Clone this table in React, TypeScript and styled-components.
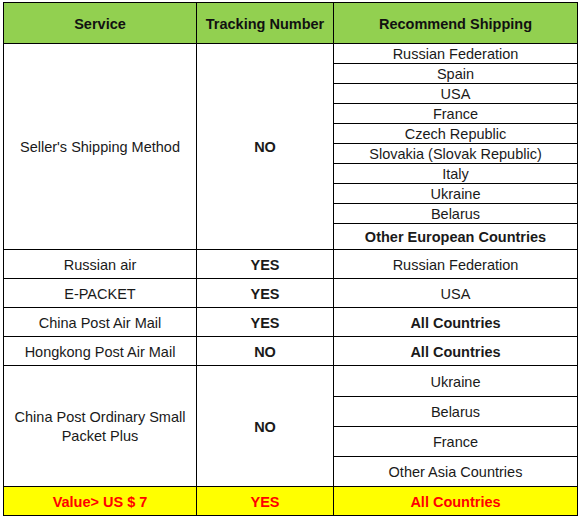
import React from "react";
import styled, { createGlobalStyle } from "styled-components";

const GlobalStyle = createGlobalStyle`
  html, body {
    margin: 0;
    padding: 0;
    background: #fff;
  }
  body {
    font-family: "Liberation Sans", Arial, sans-serif;
  }
`;

type Row = { text: string; bold?: boolean; h: number };

const sellerCountries: Row[] = [
  { text: "Russian Federation", h: 19 },
  { text: "Spain", h: 19 },
  { text: "USA", h: 19 },
  { text: "France", h: 19 },
  { text: "Czech Republic", h: 19 },
  { text: "Slovakia (Slovak Republic)", h: 19 },
  { text: "Italy", h: 19 },
  { text: "Ukraine", h: 19 },
  { text: "Belarus", h: 19 },
  { text: "Other European Countries", bold: true, h: 25 },
];

const singles = [
  { service: "Russian air", tracking: "YES", ship: "Russian Federation", shipBold: false },
  { service: "E-PACKET", tracking: "YES", ship: "USA", shipBold: false },
  { service: "China Post Air Mail", tracking: "YES", ship: "All Countries", shipBold: true },
  { service: "Hongkong Post Air Mail", tracking: "NO", ship: "All Countries", shipBold: true },
];

const smallPacketCountries: Row[] = [
  { text: "Ukraine", h: 30 },
  { text: "Belarus", h: 29 },
  { text: "France", h: 29 },
  { text: "Other Asia Countries", h: 29 },
];

export default function App() {
  const rowHeights = [
    40,
    ...sellerCountries.map((r) => r.h),
    28, 28, 28, 28,
    ...smallPacketCountries.map((r) => r.h),
    28,
  ];

  return (
    <>
      <GlobalStyle />
      <Page>
        <Table style={{ gridTemplateRows: rowHeights.map((h) => `${h}px`).join(" ") }}>
          <Head>Service</Head>
          <Head>Tracking Number</Head>
          <Head>Recommend Shipping</Head>

          <Cell $span={sellerCountries.length}>Seller's Shipping Method</Cell>
          <Cell $span={sellerCountries.length} $bold>NO</Cell>
          {sellerCountries.map((c, i) => (
            <Cell key={i} $bold={c.bold}>{c.text}</Cell>
          ))}

          {singles.map((s, i) => (
            <React.Fragment key={i}>
              <Cell>{s.service}</Cell>
              <Cell $bold>{s.tracking}</Cell>
              <Cell $bold={s.shipBold}>{s.ship}</Cell>
            </React.Fragment>
          ))}

          <Cell $span={smallPacketCountries.length}>
            China Post Ordinary Small
            <br />
            Packet Plus
          </Cell>
          <Cell $span={smallPacketCountries.length} $bold>NO</Cell>
          {smallPacketCountries.map((c, i) => (
            <Cell key={i}>{c.text}</Cell>
          ))}

          <Highlight>Value&gt; US $ 7</Highlight>
          <Highlight>YES</Highlight>
          <Highlight>All Countries</Highlight>
        </Table>
      </Page>
    </>
  );
}

const Page = styled.div`
  padding: 2px 0 0 3px;
`;

const Table = styled.div`
  display: grid;
  grid-template-columns: 192px 136px 243px;
  gap: 1px;
  padding: 1px;
  width: max-content;
  background: #000;
`;

const Cell = styled.div<{ $span?: number; $bold?: boolean }>`
  grid-row: ${(p) => (p.$span ? `span ${p.$span}` : "auto")};
  display: flex;
  align-items: center;
  justify-content: center;
  padding-top: 2px;
  box-sizing: border-box;
  text-align: center;
  background: #fff;
  color: #1a1a1a;
  font-size: 14.5px;
  line-height: 19px;
  font-weight: ${(p) => (p.$bold ? 700 : 400)};
  white-space: nowrap;
`;

const Head = styled(Cell)`
  padding-top: 3px;
  background: #92d050;
  color: #111;
  font-weight: 700;
`;

const Highlight = styled(Cell)`
  background: #ffff00;
  color: #f00;
  font-weight: 700;
`;
